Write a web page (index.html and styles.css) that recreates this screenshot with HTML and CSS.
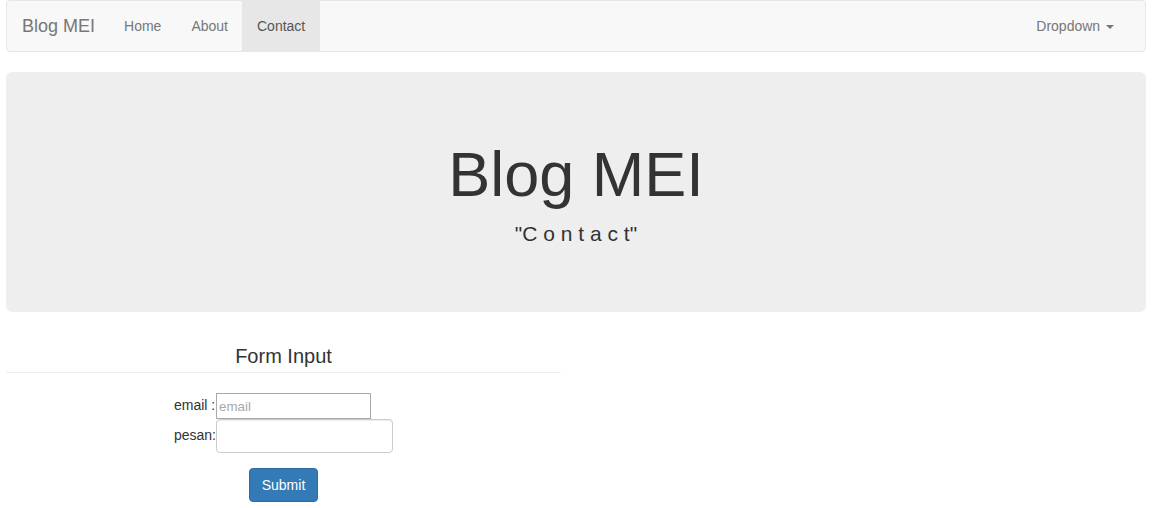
FILE: index.html
```html
<!DOCTYPE html>
<html>
<head>
<meta charset="utf-8">
<title>Blog MEI</title>
<link rel="stylesheet" href="styles.css">
</head>
<body>
<div class="page">
  <nav class="navbar">
    <a class="brand" href="#">Blog MEI</a>
    <ul class="nav">
      <li><a href="#">Home</a></li>
      <li><a href="#">About</a></li>
      <li class="active"><a href="#">Contact</a></li>
    </ul>
    <ul class="nav nav-right">
      <li><a href="#">Dropdown <span class="caret"></span></a></li>
    </ul>
  </nav>

  <header class="jumbotron">
    <h1>Blog MEI</h1>
    <p>"C o n t a c t"</p>
  </header>

  <section class="form-col">
    <h3 class="form-title">Form Input</h3>
    <form class="form-body">
      <table class="form-table">
        <tr>
          <td class="lbl">email :</td>
          <td><input class="in-email" type="text" placeholder="email"></td>
        </tr>
        <tr>
          <td class="lbl">pesan:</td>
          <td><textarea class="in-pesan"></textarea></td>
        </tr>
      </table>
      <button type="button" class="btn">Submit</button>
    </form>
  </section>
</div>
</body>
</html>
```

FILE: styles.css
```css
* { box-sizing: border-box; }
html, body { margin: 0; padding: 0; background: #fff; }
body {
  font-family: "Liberation Sans", Arial, sans-serif;
  font-size: 14px;
  line-height: 1.42857;
  color: #333;
}
.page { padding: 0 6px; }

.navbar {
  display: flex;
  align-items: stretch;
  height: 52px;
  background: #f8f8f8;
  border: 1px solid #e7e7e7;
  border-radius: 4px;
  margin-bottom: 20px;
}
.brand {
  display: block;
  padding: 0 14px 0 15px;
  font-size: 18px;
  line-height: 50px;
  color: #777;
  text-decoration: none;
}
.nav {
  display: flex;
  list-style: none;
  margin: 0;
  padding: 0;
}
.nav li a {
  display: block;
  padding: 0 15px;
  line-height: 50px;
  color: #777;
  text-decoration: none;
}
.nav li:nth-child(2) a { padding-right: 14px; }
.nav li.active a { background: #e7e7e7; color: #555; }
.nav-right { margin-left: auto; margin-right: 16px; }
.nav-right li a { padding-left: 16px; }
.caret {
  display: inline-block;
  width: 0;
  height: 0;
  margin-left: 2px;
  vertical-align: middle;
  border-top: 4px solid #777;
  border-left: 4px solid transparent;
  border-right: 4px solid transparent;
}

.jumbotron {
  background: #eee;
  border-radius: 6px;
  padding: 48px 60px;
  text-align: center;
  margin-bottom: 30px;
}
.jumbotron h1 {
  margin: 20px 0 10px;
  font-size: 63px;
  font-weight: 500;
  line-height: 1.1;
  color: #333;
}
.jumbotron p {
  margin: 0 0 15px;
  font-size: 21px;
  line-height: 30px;
  font-weight: 200;
}

.form-col { width: 555px; text-align: center; padding-top: 3px; }
.form-title {
  margin: 0;
  padding-bottom: 5px;
  font-size: 20px;
  font-weight: 500;
  line-height: 22px;
  border-bottom: 1px solid #eee;
}
.form-body {
  display: flex;
  flex-direction: column;
  align-items: center;
  padding-top: 20px;
}
.form-table { border-collapse: collapse; border-spacing: 0; }
.form-table td { padding: 0; vertical-align: middle; text-align: left; }
.lbl { white-space: nowrap; padding-right: 2px; }
.in-email {
  display: block;
  width: 155px;
  height: 26px;
  margin: 0;
  padding: 1px 2px;
  border: 1px solid #a9a9a9;
  font-family: "Liberation Sans", Arial, sans-serif;
  font-size: 13.33px;
  color: #333;
  background: #fff;
}
.in-email::placeholder { color: #a9a9a9; }
.in-pesan {
  display: block;
  width: 177px;
  height: 34px;
  margin: 0;
  padding: 6px 12px;
  border: 1px solid #ccc;
  border-radius: 4px;
  resize: none;
  font-family: "Liberation Sans", Arial, sans-serif;
  font-size: 14px;
  background: #fff;
  box-shadow: inset 0 1px 1px rgba(0,0,0,.075);
}
.btn {
  margin-top: 15px;
  height: 34px;
  padding: 6px 12px;
  font-family: "Liberation Sans", Arial, sans-serif;
  font-size: 14px;
  line-height: 20px;
  color: #fff;
  background: #337ab7;
  border: 1px solid #2e6da4;
  border-radius: 4px;
}
```
